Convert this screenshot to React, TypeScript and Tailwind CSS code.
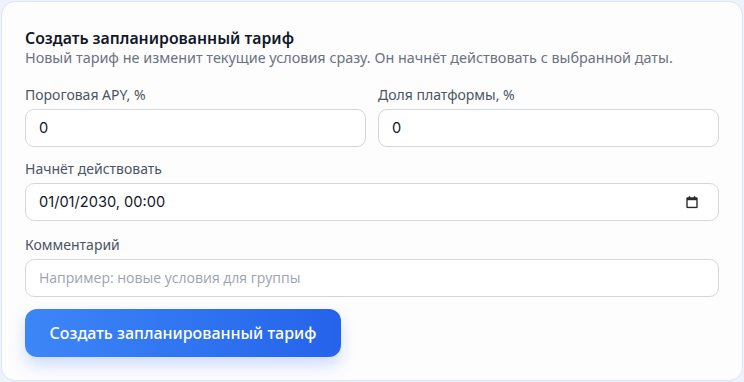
const labelCls = 'text-sm leading-5 text-[#4b5563]';
const inputCls =
  'h-[38px] w-full rounded-[9px] border border-[#d4d7dd] bg-white px-[13px] text-[14.6px] text-[#111827] outline-none font-["Inter",sans-serif] placeholder:font-["Open_Sans",sans-serif] placeholder:text-sm placeholder:text-[#9ca3af]';

function Field({ label, children }: { label: string; children: React.ReactNode }) {
  return (
    <label className="flex flex-col gap-1">
      <span className={labelCls}>{label}</span>
      {children}
    </label>
  );
}

function CalendarIcon() {
  return (
    <svg width="12" height="13" viewBox="0 0 12 13" className="text-[#2b2b2b]">
      <rect x="1" y="2.5" width="10" height="9.5" rx="0.5" fill="none" stroke="currentColor" strokeWidth="1.4" />
      <rect x="1" y="2.5" width="10" height="2.2" fill="currentColor" />
      <rect x="2.8" y="0.6" width="1.3" height="2.4" fill="currentColor" />
      <rect x="7.9" y="0.6" width="1.3" height="2.4" fill="currentColor" />
    </svg>
  );
}

export default function App() {
  return (
    <div className="min-h-screen bg-[#eef3fb] p-px font-['Noto_Sans',sans-serif]">
      <div className="h-[380px] w-[742px] rounded-[14px] border border-[#dde6f5] bg-[#fdfdfe] px-[23px] pt-[24px] pb-[22px]">
        <div className="flex flex-col">
          <h2 className="text-[15.8px] leading-6 font-semibold text-[#111827]">Создать запланированный тариф</h2>
          <p className="-mt-0.5 text-[14.4px] leading-5 text-[#6b7280]">
            Новый тариф не изменит текущие условия сразу. Он начнёт действовать с выбранной даты.
          </p>
        </div>

        <div className="mt-[17px] flex flex-col gap-3">
          <div className="grid grid-cols-2 gap-3">
            <Field label="Пороговая APY, %">
              <input className={inputCls} defaultValue="0" />
            </Field>
            <Field label="Доля платформы, %">
              <input className={inputCls} defaultValue="0" />
            </Field>
          </div>

          <Field label="Начнёт действовать">
            <div className="relative">
              <input className={inputCls} defaultValue="01/01/2030, 00:00" readOnly />
              <span className="absolute top-1/2 right-[21px] -translate-y-1/2">
                <CalendarIcon />
              </span>
            </div>
          </Field>

          <div className="mt-0.5">
            <Field label="Комментарий">
              <input className={inputCls} placeholder="Например: новые условия для группы" />
            </Field>
          </div>
        </div>

        <button className="mt-3 h-12 w-[316px] rounded-xl bg-gradient-to-r from-[#3d86f7] to-[#2563eb] text-base font-medium text-white shadow-[0_8px_16px_rgba(37,99,235,0.22)]">
          Создать запланированный тариф
        </button>
      </div>
    </div>
  );
}
